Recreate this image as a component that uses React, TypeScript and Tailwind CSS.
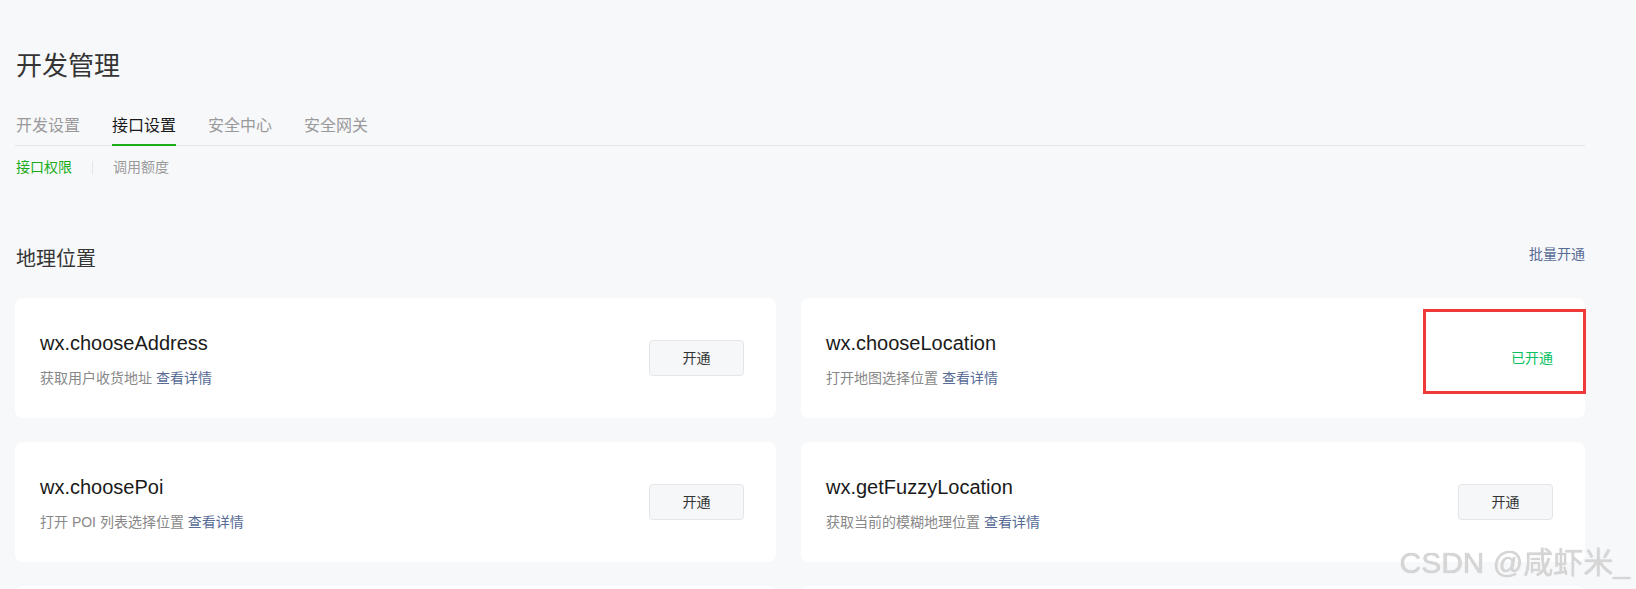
const font = { fontFamily: '"Liberation Sans", "Noto Sans CJK SC", sans-serif' };

type Api = {
  name: string;
  desc: string;
  opened?: boolean;
  marked?: boolean;
};

const rows: Api[][] = [
  [
    { name: "wx.chooseAddress", desc: "获取用户收货地址" },
    { name: "wx.chooseLocation", desc: "打开地图选择位置", opened: true, marked: true },
  ],
  [
    { name: "wx.choosePoi", desc: "打开 POI 列表选择位置" },
    { name: "wx.getFuzzyLocation", desc: "获取当前的模糊地理位置" },
  ],
];

const tabs = ["开发设置", "接口设置", "安全中心", "安全网关"];

function ApiCard({ api }: { api: Api }) {
  return (
    <div className="relative flex h-[120px] items-center justify-between rounded-lg bg-white pl-[25px] pr-8">
      <div>
        <div className="text-[20px] leading-[28px] text-[#1a1a1a]">{api.name}</div>
        <div className="mt-[11px] text-[14px] leading-[20px] text-[#888]">
          {api.desc} <a href="#" className="text-[#576b95]">查看详情</a>
        </div>
      </div>
      {api.opened ? (
        <span className="text-[14px] text-[#07c160]">已开通</span>
      ) : (
        <button className="h-9 w-[95px] rounded border border-[#e4e5e9] bg-[#f6f7f9] text-[14px] text-[#353535]">
          开通
        </button>
      )}
      {api.marked && (
        <div className="pointer-events-none absolute right-[-1px] top-[11px] h-[85px] w-[163px] border-[3px] border-[#f03a3a]" />
      )}
    </div>
  );
}

export default function App() {
  return (
    <div className="relative min-h-screen bg-[#f7f8fa] pl-[15px] pr-[51px] pt-[48px]" style={font}>
      {/* Header */}
      <h1 className="pl-px text-[26px] leading-[36px] text-[#353535]">开发管理</h1>

      <div className="mt-[30px] flex gap-8 border-b border-[#e4e5e9] pl-px">
        {tabs.map((t) => (
          <a
            key={t}
            href="#"
            className={
              t === "接口设置"
                ? "-mb-px border-b-2 border-[#1aad19] pb-1.5 text-[16px] leading-[24px] text-[#1a1a1a]"
                : "-mb-px border-b-2 border-transparent pb-1.5 text-[16px] leading-[24px] text-[#9a9a9a]"
            }
          >
            {t}
          </a>
        ))}
      </div>

      <div className="mt-[11px] flex items-center gap-5 pl-px text-[14px] leading-[20px]">
        <a href="#" className="text-[#1aad19]">接口权限</a>
        <span className="h-[13px] w-px bg-[#e4e5e9]" />
        <a href="#" className="text-[#9a9a9a]">调用额度</a>
      </div>

      {/* Section */}
      <div className="mt-[68px] flex items-start justify-between">
        <h2 className="pl-px text-[20px] leading-[28px] text-[#353535]">地理位置</h2>
        <a href="#" className="-mt-px text-[14px] leading-[20px] text-[#576b95]">批量开通</a>
      </div>

      <div className="mt-[25px] grid grid-cols-[761px_784px] gap-x-[25px] gap-y-6">
        {rows.map((row) => row.map((api) => <ApiCard key={api.name} api={api} />))}
        <div className="h-[120px] rounded-lg bg-white" />
        <div className="h-[120px] rounded-lg bg-white" />
      </div>

      {/* Watermark */}
      <div
        className="pointer-events-none fixed bottom-[8px] right-[6px] text-[30px] leading-[36px] text-[#d6d6d6]"
        style={{ textShadow: "0 0 1px #b8b8b8" }}
      >
        CSDN @咸虾米_
      </div>
    </div>
  );
}
